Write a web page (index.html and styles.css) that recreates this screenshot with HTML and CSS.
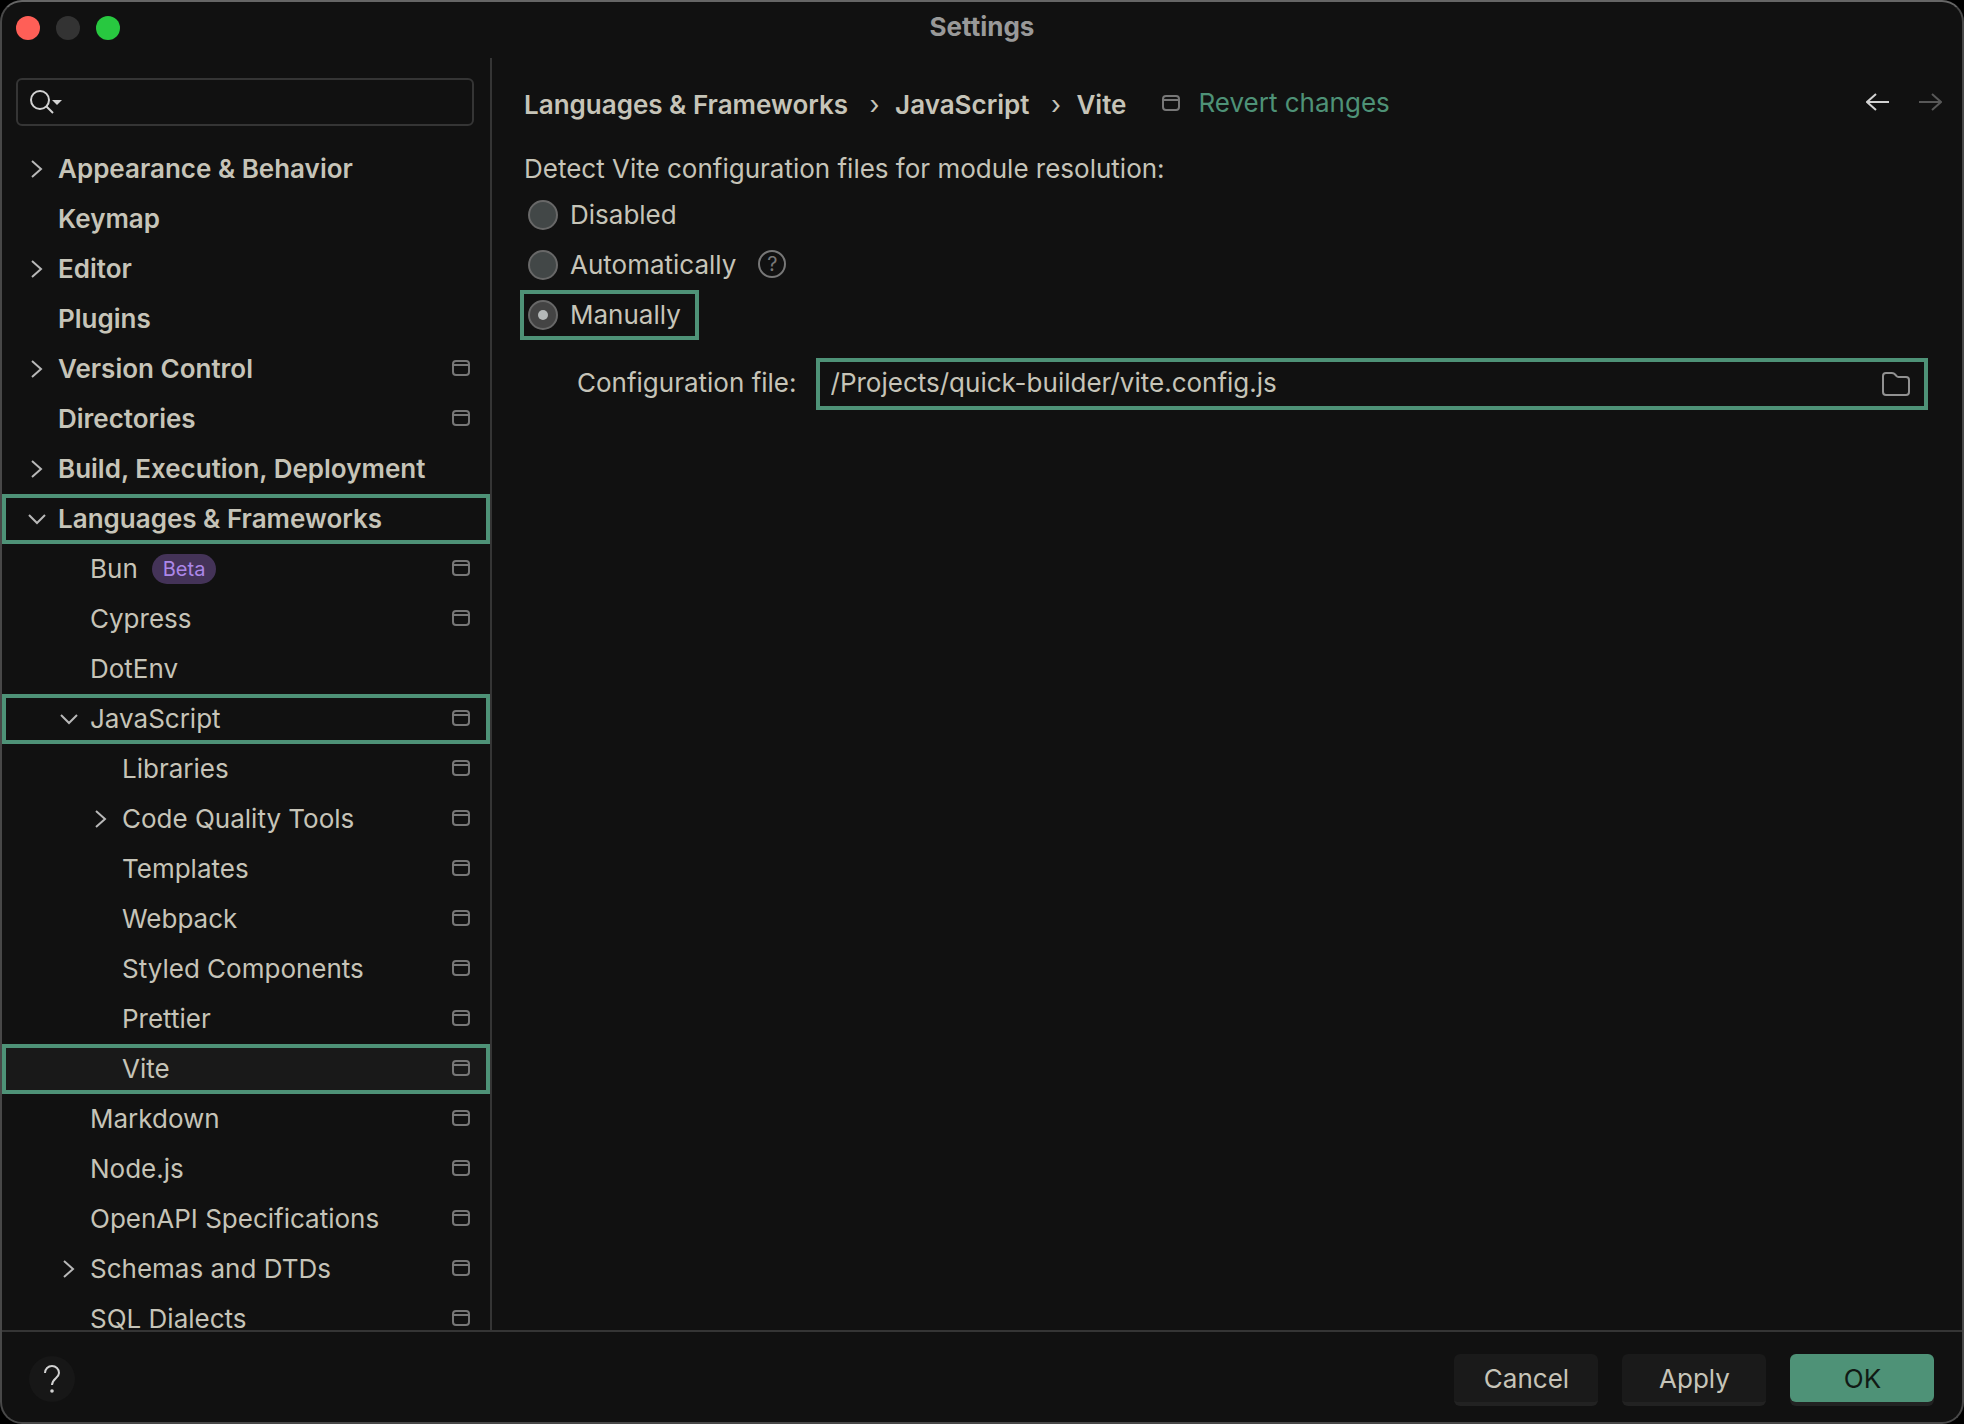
FILE: index.html
```html
<!DOCTYPE html>
<html lang="en">
<head>
<meta charset="utf-8">
<title>Settings</title>
<link rel="stylesheet" href="styles.css">
</head>
<body>
<svg class="sprite" aria-hidden="true">
  <symbol id="right" viewBox="0 0 32 32"><path d="M12 8l9 8-9 8"/></symbol>
  <symbol id="down" viewBox="0 0 32 32"><path d="M9 12l8 8 8-8"/></symbol>
  <symbol id="project" viewBox="0 0 18 16"><rect x="1" y="1" width="16" height="14" rx="3"/><path d="M1 5h16"/></symbol>
</svg>
<div class="window">
  <header class="titlebar">
    <div class="lights"><span class="light close"></span><span class="light minimize"></span><span class="light zoom"></span></div>
    <h1 class="title">Settings</h1>
  </header>
  <div class="body">
    <aside class="sidebar">
      <label class="search">
        <svg class="search-icon" viewBox="0 0 32 24" aria-hidden="true"><circle cx="10" cy="10" r="9"/><path d="M16.500 16.500l6.500 6.500"/><path class="solid" d="M22 10h10l-5 5z"/></svg>
        <input class="search-input" type="text" aria-label="Search settings">
      </label>
      <nav class="tree" aria-label="Settings categories">
        <a class="row top" href="#"><svg class="chevron"><use href="#right"/></svg><span class="name">Appearance &amp; Behavior</span></a>
        <a class="row top" href="#"><span class="chevron"></span><span class="name">Keymap</span></a>
        <a class="row top" href="#"><svg class="chevron"><use href="#right"/></svg><span class="name">Editor</span></a>
        <a class="row top" href="#"><span class="chevron"></span><span class="name">Plugins</span></a>
        <a class="row top" href="#"><svg class="chevron"><use href="#right"/></svg><span class="name">Version Control</span><svg class="project"><use href="#project"/></svg></a>
        <a class="row top" href="#"><span class="chevron"></span><span class="name">Directories</span><svg class="project"><use href="#project"/></svg></a>
        <a class="row top" href="#"><svg class="chevron"><use href="#right"/></svg><span class="name">Build, Execution, Deployment</span></a>
        <a class="row top marked" href="#"><svg class="chevron"><use href="#down"/></svg><span class="name">Languages &amp; Frameworks</span></a>
        <a class="row level1" href="#"><span class="chevron"></span><span class="name">Bun<span class="badge">Beta</span></span><svg class="project"><use href="#project"/></svg></a>
        <a class="row level1" href="#"><span class="chevron"></span><span class="name">Cypress</span><svg class="project"><use href="#project"/></svg></a>
        <a class="row level1" href="#"><span class="chevron"></span><span class="name">DotEnv</span></a>
        <a class="row level1 marked" href="#"><svg class="chevron"><use href="#down"/></svg><span class="name">JavaScript</span><svg class="project"><use href="#project"/></svg></a>
        <a class="row level2" href="#"><span class="chevron"></span><span class="name">Libraries</span><svg class="project"><use href="#project"/></svg></a>
        <a class="row level2" href="#"><svg class="chevron"><use href="#right"/></svg><span class="name">Code Quality Tools</span><svg class="project"><use href="#project"/></svg></a>
        <a class="row level2" href="#"><span class="chevron"></span><span class="name">Templates</span><svg class="project"><use href="#project"/></svg></a>
        <a class="row level2" href="#"><span class="chevron"></span><span class="name">Webpack</span><svg class="project"><use href="#project"/></svg></a>
        <a class="row level2" href="#"><span class="chevron"></span><span class="name">Styled Components</span><svg class="project"><use href="#project"/></svg></a>
        <a class="row level2" href="#"><span class="chevron"></span><span class="name">Prettier</span><svg class="project"><use href="#project"/></svg></a>
        <a class="row level2 marked selected" href="#" aria-current="page"><span class="chevron"></span><span class="name">Vite</span><svg class="project"><use href="#project"/></svg></a>
        <a class="row level1" href="#"><span class="chevron"></span><span class="name">Markdown</span><svg class="project"><use href="#project"/></svg></a>
        <a class="row level1" href="#"><span class="chevron"></span><span class="name">Node.js</span><svg class="project"><use href="#project"/></svg></a>
        <a class="row level1" href="#"><span class="chevron"></span><span class="name">OpenAPI Specifications</span><svg class="project"><use href="#project"/></svg></a>
        <a class="row level1" href="#"><svg class="chevron"><use href="#right"/></svg><span class="name">Schemas and DTDs</span><svg class="project"><use href="#project"/></svg></a>
        <a class="row level1" href="#"><span class="chevron"></span><span class="name">SQL Dialects</span><svg class="project"><use href="#project"/></svg></a>
      </nav>
    </aside>
    <main class="content">
      <div class="page-head">
        <div class="crumbs"><span>Languages &amp; Frameworks</span><span class="separator">›</span><span>JavaScript</span><span class="separator">›</span><span>Vite</span></div>
        <svg class="project"><use href="#project"/></svg>
        <a class="revert" href="#">Revert changes</a>
        <div class="history">
          <button class="arrow" type="button" aria-label="Back"><svg viewBox="0 0 24 18"><path d="M23 9H1M10 1L1 9l9 8"/></svg></button>
          <button class="arrow" type="button" aria-label="Forward" disabled><svg viewBox="0 0 24 18"><path d="M1 9h22M14 1l9 8-9 8"/></svg></button>
        </div>
      </div>
      <fieldset class="options">
        <legend class="legend">Detect Vite configuration files for module resolution:</legend>
        <div class="option"><label class="choice"><input class="radio" type="radio" name="mode">Disabled</label></div>
        <div class="option"><label class="choice"><input class="radio" type="radio" name="mode">Automatically</label><button class="hint" type="button" aria-label="About automatic detection">?</button></div>
        <div class="option"><label class="choice boxed"><input class="radio" type="radio" name="mode" checked>Manually</label></div>
      </fieldset>
      <div class="config">
        <label class="config-label" for="config-file">Configuration file:</label>
        <div class="field">
          <input class="field-input" id="config-file" type="text" value="/Projects/quick-builder/vite.config.js">
          <button class="browse" type="button" aria-label="Browse"><svg viewBox="0 0 28 24"><path d="M1 4a3 3 0 0 1 3-3h6c1 0 2 0 2.500 1l2 2c.5.8 1 1 2 1H24a3 3 0 0 1 3 3v12a3 3 0 0 1-3 3H4a3 3 0 0 1-3-3z"/></svg></button>
        </div>
      </div>
    </main>
  </div>
  <footer class="footer">
    <button class="help" type="button" aria-label="Help"><svg viewBox="0 0 16 28"><path d="M1 8a7 7 0 0 1 14 0c0 5-7 5.500-7 12"/><circle class="solid" cx="8" cy="26" r="1.800"/></svg></button>
    <div class="actions">
      <button class="button" type="button">Cancel</button>
      <button class="button" type="button">Apply</button>
      <button class="button primary" type="submit">OK</button>
    </div>
  </footer>
</div>
</body>
</html>
```
FILE: styles.css
```css
:root {
  --bg: #111111;
  --text: #c6c4b8;
  --line: #353535;
  --muted: #777777;
  --accent: #4e9277;
}

* { box-sizing: border-box; }

body {
  margin: 0;
  background: #000000;
  color: var(--text);
  font: 26px/32px Inter, sans-serif;
}

button, input { font: inherit; color: inherit; }
button { padding: 0; border: 0; background: none; }
a { color: inherit; text-decoration: none; }
svg { display: block; flex: none; fill: none; stroke: currentColor; stroke-width: 2; }
.solid { fill: currentColor; stroke: none; }
.sprite { position: absolute; width: 0; height: 0; }

.window {
  display: flex;
  flex-direction: column;
  height: 100vh;
  border: 2px solid #484848;
  border-top-color: #666666;
  border-radius: 22px;
  background: var(--bg);
  overflow: hidden;
}

/* Title bar */
.titlebar {
  display: grid;
  grid-template-columns: 1fr auto 1fr;
  flex: none;
  height: 56px;
  padding: 9px 14px;
}
.lights { display: flex; gap: 16px; padding-top: 5px; }
.light { width: 24px; height: 24px; border-radius: 50%; }
.close { background: #ff5f57; }
.minimize { background: #333333; }
.zoom { background: #28c840; }
.title { margin: 0; color: #999999; font-size: 26px; font-weight: 700; }

.body { display: flex; flex: 1; min-height: 0; }

/* Sidebar */
.sidebar {
  flex: none;
  width: 490px;
  padding-top: 20px;
  border-right: 2px solid var(--line);
  overflow: hidden;
}
.search {
  display: flex;
  align-items: center;
  height: 48px;
  margin: 0 16px 18px 14px;
  padding: 0 12px;
  border: 2px solid var(--line);
  border-radius: 6px;
}
.search-icon { width: 32px; height: 24px; color: #d2d2d2; }
.search-input { flex: 1; min-width: 0; border: 0; outline: 0; background: none; }

.row {
  display: flex;
  align-items: center;
  height: 50px;
  padding: 0 16px 0 14px;
  border: 4px solid transparent;
}
.top { font-weight: 620; }
.level1 { padding-left: 46px; }
.level2 { padding-left: 78px; }
.marked { border-color: var(--accent); }
.selected { background: #191919; }
.chevron { flex: none; width: 32px; height: 32px; margin-right: 6px; color: #b8b8b8; }
.name { display: flex; align-items: center; flex: 1; white-space: nowrap; }
.badge {
  margin-left: 14px;
  padding: 0 11px;
  border-radius: 15px;
  background: #443358;
  color: #ac87e8;
  font-size: 20px;
  line-height: 30px;
}
.project { width: 18px; height: 16px; margin-bottom: 2px; color: var(--muted); }

/* Page */
.content { flex: 1; min-width: 0; padding: 28px 34px 0 28px; }
.page-head { display: flex; align-items: center; height: 34px; padding-left: 4px; }
.crumbs { display: flex; padding-top: 4px; font-weight: 600; }
.separator { width: 47px; padding-left: 6px; text-align: center; font-weight: 400; }
.page-head > .project { margin: 0 18px 0 36px; }
.revert { color: var(--accent); }
.history { display: flex; gap: 28px; margin-left: auto; margin-right: -14px; padding-bottom: 2px; }
.arrow { color: #d2d2d2; }
.arrow svg { width: 24px; height: 18px; }
.arrow:disabled { color: #585858; }

.options { margin: 0; padding: 0; border: 0; }
.legend { padding: 33px 4px 5px; }
.option { display: flex; align-items: center; gap: 4px; }
.choice {
  display: flex;
  align-items: center;
  gap: 12px;
  height: 50px;
  padding: 0 14px 0 4px;
  border: 4px solid transparent;
}
.boxed { border-color: var(--accent); }
.radio {
  display: grid;
  place-items: center;
  appearance: none;
  width: 30px;
  height: 30px;
  margin: 0;
  border: 2px solid #686868;
  border-radius: 50%;
  background: #424747;
}
.radio:checked { background: #444444; }
.radio:checked::before {
  content: "";
  width: 10px;
  height: 10px;
  border-radius: 50%;
  background: #b4b8b8;
}
.hint {
  width: 28px;
  height: 28px;
  margin-bottom: 2px;
  border: 2px solid var(--muted);
  border-radius: 50%;
  color: var(--muted);
  font-size: 20px;
  line-height: 24px;
}

.config { display: flex; align-items: center; gap: 19px; margin-top: 18px; padding-left: 57px; }
.config-label { padding-bottom: 2px; }
.field {
  display: flex;
  align-items: center;
  flex: 1;
  min-width: 0;
  height: 52px;
  padding: 0 14px 0 11px;
  border: 4px solid var(--accent);
}
.field-input { flex: 1; min-width: 0; padding: 0 0 2px; border: 0; outline: 0; background: none; }
.browse { color: #919191; }
.browse svg { width: 28px; height: 24px; }

/* Footer */
.footer {
  display: flex;
  align-items: flex-start;
  justify-content: space-between;
  flex: none;
  height: 92px;
  padding: 22px 28px 0 27px;
  border-top: 2px solid var(--line);
}
.help {
  display: grid;
  place-items: center;
  width: 46px;
  height: 46px;
  margin-top: 2px;
  border-radius: 50%;
  background: #171717;
  color: #d2d2d2;
}
.help svg { width: 16px; height: 28px; }
.actions { display: flex; gap: 24px; }
.button {
  width: 144px;
  height: 52px;
  padding: 2px 0 0 1px;
  border-bottom: 4px solid #222222;
  border-radius: 6px;
  background: #1a1a1a;
}
.primary { height: 48px; border: 0; background: var(--accent); color: #111a15; box-shadow: 0 4px #222222; }
```
